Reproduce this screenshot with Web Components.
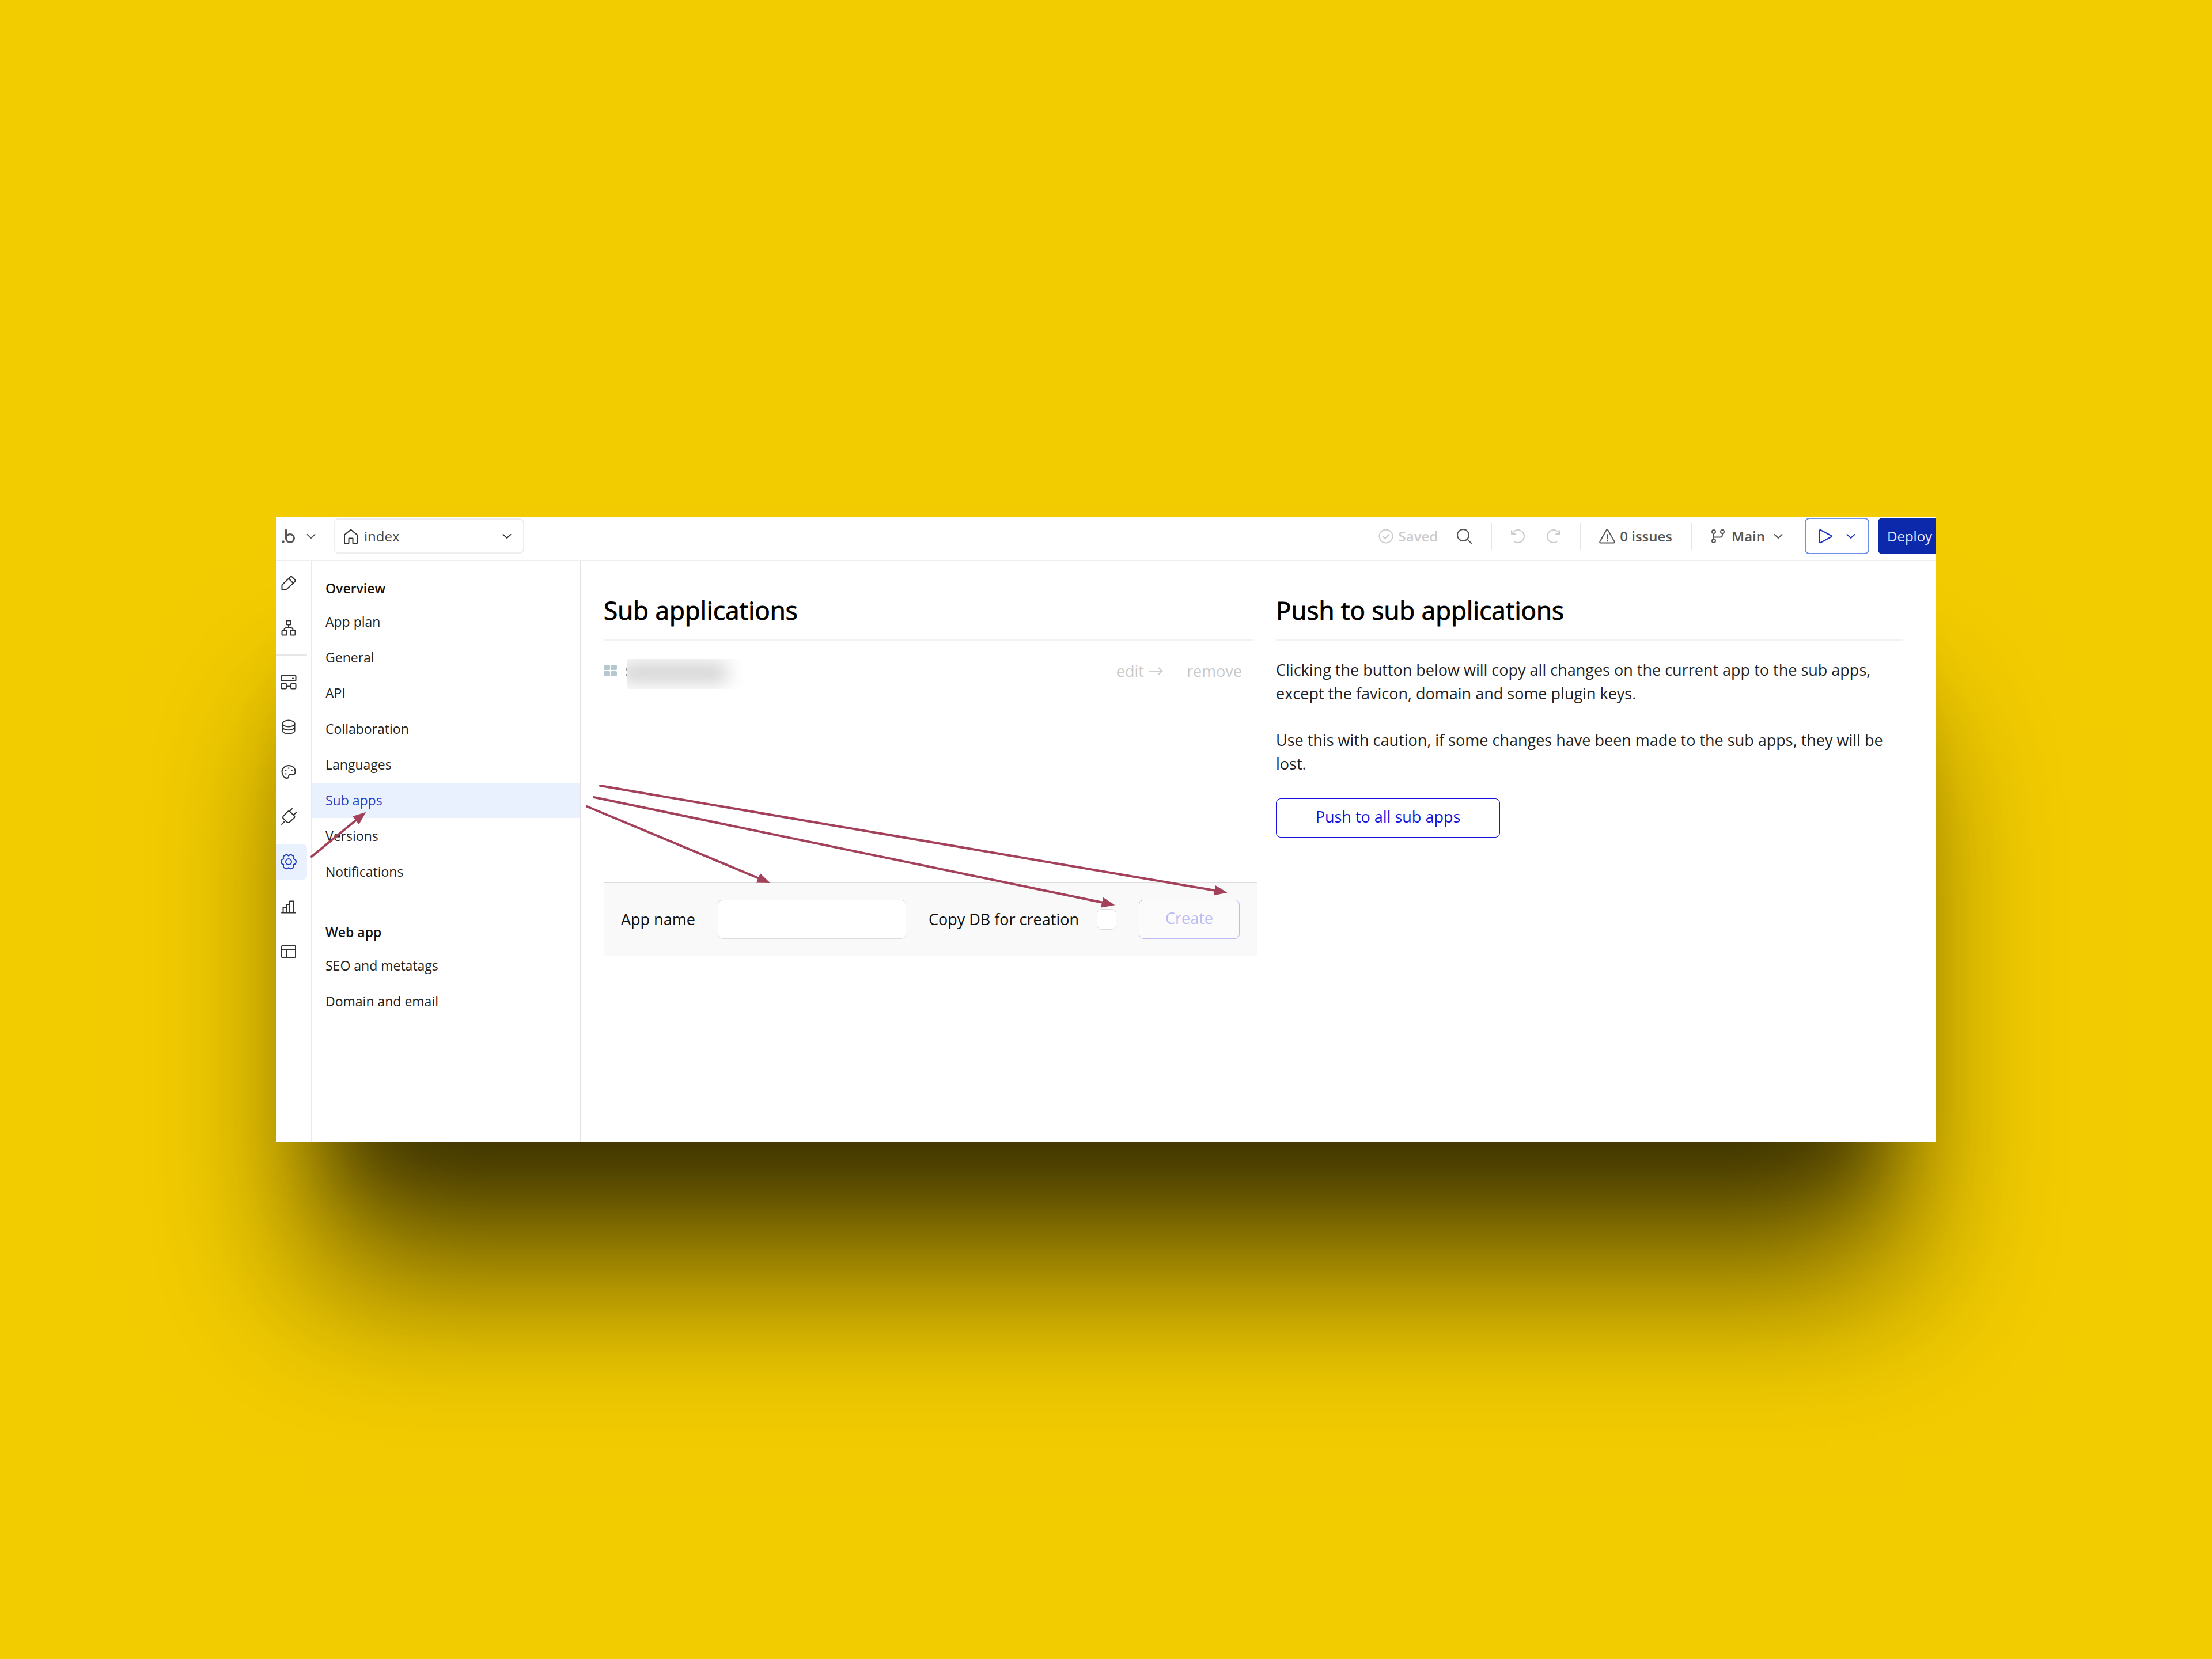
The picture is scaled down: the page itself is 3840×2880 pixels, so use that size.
<!DOCTYPE html>
<html lang="en">
<head>
<meta charset="utf-8">
<title>Sub applications</title>
<style>
    html, body { height: 100%; }

    body {
        margin: 0;
        display: flex;
        align-items: center;
        justify-content: center;
        background: #f3cc00;
        font-family: "Open Sans", "Noto Sans CJK JP", sans-serif;
        font-size: 24px;
        color: #222;
    }
</style>
</head>
<body>
    <app-window>
        <top-bar slot="top"></top-bar>
        <icon-rail slot="rail"></icon-rail>
        <side-nav slot="nav">
            <nav-section>
                <span slot="title">Overview</span>
                <nav-item>App plan</nav-item>
                <nav-item>General</nav-item>
                <nav-item>API</nav-item>
                <nav-item>Collaboration</nav-item>
                <nav-item>Languages</nav-item>
                <nav-item active>Sub apps</nav-item>
                <nav-item>Versions</nav-item>
                <nav-item>Notifications</nav-item>
            </nav-section>
            <nav-section>
                <span slot="title">Web app</span>
                <nav-item>SEO and metatags</nav-item>
                <nav-item>Domain and email</nav-item>
            </nav-section>
        </side-nav>
        <content-panel>
            <span slot="title">Sub applications</span>
            <sub-app-list></sub-app-list>
            <create-form></create-form>
        </content-panel>
        <content-panel wide-rule>
            <span slot="title">Push to sub applications</span>
            <push-panel>
                <p>Clicking the button below will copy all changes on the current app to the sub apps, except the favicon, domain and some plugin keys.</p>
                <p>Use this with caution, if some changes have been made to the sub apps, they will be lost.</p>
            </push-panel>
        </content-panel>
        <arrow-layer slot="overlay"></arrow-layer>
    </app-window>

<script>
// attach an open shadow root and fill it
function define(name, html) {
    const template = document.createElement('template');
    template.innerHTML = html;

    window.customElements.define(name, class extends HTMLElement {
        constructor() {
            super();
            this.attachShadow({ mode: 'open' });
            this.shadowRoot.appendChild(template.content.cloneNode(true));
        }
    });
}

// ICONS, all on a 28 x 28 grid
const icons = {
    logo: '<circle cx="3.5" cy="23.500" r="2.200" fill="currentColor" stroke="none"/><path d="M8.500 3v14" stroke-width="3"/><circle cx="15.500" cy="17.500" r="7" stroke-width="3"/>',
    chevron: '<path d="M7.500 11l6.500 6 6.500-6"/>',
    home: '<path d="M3 26V11.500L14 2.500l11 9V26h-7.500v-8.500h-7V26z"/>',
    saved: '<circle cx="14" cy="14" r="11.500"/><path d="M9 14.500l3.500 3.500 6.500-7"/>',
    search: '<circle cx="12" cy="12" r="10"/><path d="M19 19l7.500 7.500"/>',
    undo: '<path d="M2 4v6h7"/><path d="M3 9.500a11 11 0 1 1 4.500 14"/>',
    redo: '<path d="M26 4v6h-7"/><path d="M25 9.500a11 11 0 1 0-4.500 14"/>',
    warning: '<path d="M12.500 3.500q1.500-2 3 0L26.500 23q1 2.500-1.500 2.500H3q-2.500 0-1.500-2.500z"/><path d="M14 11v6.500M14 20.500v2"/>',
    branch: '<circle cx="6" cy="6" r="3"/><circle cx="6" cy="22" r="3"/><circle cx="21" cy="6" r="3"/><path d="M6 9v10M6 15.500h11q4 0 4-4V9"/>',
    play: '<path d="M4 3.500v21q0 1.500 1.500.5L24 15q1-1 0-2L5.500 3Q4 2 4 3.500z"/>',
    pencil: '<path d="M2.500 25.500v-8L17 3.500q1.500-1.500 3 0l5 5q1.500 1.500 0 3L11 24.500q-1.500 1-3 1z"/><path d="M14.500 6.500l7.500 8"/>',
    tree: '<rect x="10.500" y="1.500" width="7" height="7" rx="1"/><rect x="2.500" y="18.500" width="8.500" height="8" rx="1"/><rect x="17" y="18.500" width="8.500" height="8" rx="1"/><path d="M14 8.500V14M6.500 18.500V17q0-3 3-3h9q3 0 3 3v1.500"/>',
    data: '<rect x="1.500" y="2.500" width="25" height="9.500" rx="1.500"/><rect x="1.500" y="16.500" width="8.500" height="9" rx="1.500"/><rect x="18" y="16.500" width="8.500" height="9" rx="1.500"/><path d="M10 21.500h8M21 7.500h1"/>',
    database: '<ellipse cx="14" cy="8" rx="10.500" ry="5.500"/><path d="M3.500 8v12.500c0 7 21 7 21 0V8M3.500 14c0 7 21 7 21 0"/>',
    palette: '<path d="M25.500 13C25.500 7 20.500 3 14 3S2.500 8 2.500 14 7 25 11.500 25q2.500-.500 2.500-3 0-4 4-4h5q2.500 0 2.500-5z"/><path d="M8.500 11h1M13.500 7.500h1M19 11h1M8.500 17.500h1"/>',
    plug: '<path d="M5 12.500L12.500 5q2-2 4 0l7 7q2 2 0 4L16 23q-2.500 2-5 0l-6-6q-2-2 0-4.500zM2 27l6-6M15.500 4.500L20 0M22.500 11l4.500-4.500"/>',
    gear: '<path d="M26.800 12v4q-1 2-4.100 3 1 3.500-.2 4.800l-4.300 2.500q-2 .2-4.200-2-2.200 2.200-4.200 2l-4.300-2.500Q4.300 22.500 5.300 19q-3.100-1-4.100-3v-4q1-2 4.100-3-1-3.500.2-4.800l4.300-2.500q2-.2 4.200 2 2.200-2.200 4.200-2l4.300 2.500q1.200 1.300.2 4.800 3.100 1 4.100 3z"/><circle cx="14" cy="14" r="5"/>',
    chart: '<path d="M2 24.500h24M4.500 24V15.500h5.500V24M10 15.500V10h6v14M16 10V4.500h7V24"/>',
    layout: '<rect x="2" y="4" width="24" height="20" rx="1"/><path d="M2 11h24M11 11v13"/>',
    tiles: '<g fill="currentColor" stroke="none"><rect x="0" y="4" width="11" height="9" rx="2"/><rect x="12" y="4" width="11" height="9" rx="2"/><rect x="0" y="15" width="11" height="9" rx="2"/><rect x="12" y="15" width="11" height="9" rx="2"/></g>'
};

class AppIcon extends HTMLElement {
    connectedCallback() {
        if(!this.shadowRoot) this.attachShadow({ mode: 'open' });

        this.shadowRoot.innerHTML = `
            <style>
                :host { display: block; flex: none; width: 28px; height: 28px; }
                svg { display: block; width: 100%; height: 100%; overflow: visible; }
            </style>
            <svg viewBox="0 0 28 28" fill="none" stroke="currentColor" stroke-width="2" stroke-linecap="round" stroke-linejoin="round" aria-hidden="true">${icons[this.getAttribute('name')]}</svg>
        `;
    }
}
window.customElements.define('app-icon', AppIcon);

// WINDOW
define('app-window', `
    <style>
        :host {
            position: relative;
            display: flex;
            flex-direction: column;
            width: 75%;
            min-height: 1084px;
            background: #fff;
            box-shadow:
                0 300px 340px -60px rgba(0, 0, 0, .6),
                0 170px 130px -100px rgba(0, 0, 0, .4);
        }
        .body { flex: 1; display: flex; }
        main {
            flex: 1;
            display: grid;
            grid-template-columns: 1135fr 1089fr;
            gap: 32px;
            padding: 55px 56px 0 40px;
        }
    </style>
    <slot name="top"></slot>
    <div class="body">
        <slot name="rail"></slot>
        <slot name="nav"></slot>
        <main><slot></slot></main>
    </div>
    <slot name="overlay"></slot>
`);

define('top-bar', `
    <style>
        :host {
            display: flex;
            align-items: center;
            justify-content: space-between;
            padding: 1px 0 10px 8px;
            border-bottom: 2px solid #eee;
            color: #555;
            font-weight: 600;
            line-height: 33px;
        }
        .group, .item { display: flex; align-items: center; }
        .item { gap: 8px; }
        button {
            display: flex;
            align-items: center;
            padding: 0;
            border: 0;
            background: none;
            color: inherit;
            font: inherit;
        }
        .page {
            box-sizing: border-box;
            display: flex;
            align-items: center;
            gap: 9px;
            width: 331px;
            height: 61px;
            margin-left: 25px;
            padding: 0 14px;
            border: 2px solid #eee;
            border-radius: 8px;
            color: #333;
            font-weight: 400;
        }
        select {
            flex: 1;
            appearance: none;
            padding: 0;
            border: 0;
            background: none;
            color: #444;
            font: inherit;
        }
        .logo { gap: 10px; }
        .muted { color: #ccc; }
        .line { width: 2px; height: 46px; background: #e6e6e6; }
        .tools { gap: 32px; }
        .history { display: flex; gap: 32px; }
        .main { gap: 9px; }
        .preview {
            box-sizing: border-box;
            justify-content: space-between;
            width: 112px;
            height: 63px;
            padding: 0 16px 0 20px;
            border: 2px solid #6c90ec;
            border-radius: 8px;
            color: #1c34bd;
        }
        .deploy {
            width: 100px;
            height: 63px;
            margin-left: -17px;
            padding-left: 16px;
            border-radius: 8px 0 0 8px;
            background: #0d29ab;
            color: #e8ebfa;
            font-weight: 400;
        }
    </style>
    <div class="group">
        <button class="logo" aria-label="Menu"><app-icon name="logo"></app-icon><app-icon name="chevron"></app-icon></button>
        <label class="page">
            <app-icon name="home"></app-icon>
            <select aria-label="Page"><option>index</option></select>
            <app-icon name="chevron"></app-icon>
        </label>
    </div>
    <div class="group tools">
        <span class="item muted"><app-icon name="saved"></app-icon>Saved</span>
        <button aria-label="Search"><app-icon name="search"></app-icon></button>
        <span class="line"></span>
        <span class="history muted">
            <button aria-label="Undo"><app-icon name="undo"></app-icon></button>
            <button aria-label="Redo"><app-icon name="redo"></app-icon></button>
        </span>
        <span class="line"></span>
        <button class="item"><app-icon name="warning"></app-icon>0 issues</button>
        <span class="line"></span>
        <button class="main"><app-icon name="branch"></app-icon>Main<app-icon name="chevron"></app-icon></button>
        <button class="preview" aria-label="Preview"><app-icon name="play"></app-icon><app-icon name="chevron"></app-icon></button>
        <button class="deploy">Deploy</button>
    </div>
`);

define('icon-rail', `
    <style>
        :host {
            box-sizing: border-box;
            display: flex;
            flex-direction: column;
            gap: 16px;
            width: 62px;
            padding: 7px 7px 0 0;
            border-right: 2px solid #eaeaea;
        }
        button {
            display: flex;
            align-items: center;
            height: 62px;
            padding: 0 0 0 7px;
            border: 0;
            border-radius: 0 8px 8px 0;
            background: none;
            color: #333;
        }
        button.active { background: #e9f1ff; color: #1c3fc4; }
        hr { width: 100%; height: 2px; margin: -1px 0; border: 0; background: #e6e6e6; }
    </style>
    <button aria-label="Design"><app-icon name="pencil"></app-icon></button>
    <button aria-label="Workflow"><app-icon name="tree"></app-icon></button>
    <hr>
    <button aria-label="Views"><app-icon name="data"></app-icon></button>
    <button aria-label="Data"><app-icon name="database"></app-icon></button>
    <button aria-label="Styles"><app-icon name="palette"></app-icon></button>
    <button aria-label="Plugins"><app-icon name="plug"></app-icon></button>
    <button class="active" aria-label="Settings"><app-icon name="gear"></app-icon></button>
    <button aria-label="Logs"><app-icon name="chart"></app-icon></button>
    <button aria-label="Templates"><app-icon name="layout"></app-icon></button>
`);

// SIDE NAVIGATION
define('side-nav', `
    <style>
        :host {
            box-sizing: border-box;
            display: flex;
            flex-direction: column;
            gap: 58px;
            width: 466px;
            padding-top: 31px;
            border-right: 1px solid #e2e2e2;
            font-size: 23px;
        }
    </style>
    <slot></slot>
`);

define('nav-section', `
    <style>
        :host { display: block; }
        h2 { margin: 0 0 11px; padding-left: 23px; color: #111; font-size: 23px; font-weight: 600; line-height: 33px; }
        nav { display: flex; flex-direction: column; gap: 1px; }
    </style>
    <h2><slot name="title"></slot></h2>
    <nav><slot></slot></nav>
`);

define('nav-item', `
    <style>
        :host { display: block; }
        a { display: block; padding-left: 23px; color: #222; line-height: 61px; text-decoration: none; }
        :host([active]) a { background: #e9f1ff; color: #2a41c4; }
    </style>
    <a href="#"><slot></slot></a>
`);

// CONTENT
define('content-panel', `
    <style>
        :host { display: flex; flex-direction: column; font-size: 27px; line-height: 41px; }
        /* the stroke stands in for a medium weight */
        h1 {
            margin: 0 7px 0 0;
            padding-bottom: 21px;
            border-bottom: 2px solid #f2f2f2;
            color: #000;
            font-size: 44px;
            font-weight: 400;
            line-height: 60px;
            -webkit-text-stroke: 1px #000;
        }
        :host([wide-rule]) h1 { margin-right: 0; }
    </style>
    <h1><slot name="title"></slot></h1>
    <slot></slot>
`);

define('sub-app-list', `
    <style>
        :host { box-sizing: border-box; display: block; min-height: 420px; padding: 30px 27px 0 0; }
        .row { display: flex; align-items: center; height: 44px; }
        app-icon { color: #b5c8d0; }
        /* hidden name of the app */
        .name { display: flex; width: 220px; height: 52px; margin: 12px 0 0 10px; }
        .tick { box-sizing: border-box; width: 2px; height: 14px; margin-top: 16px; border-top: 4px solid #999; border-bottom: 4px solid #999; }
        .cover { flex: 1; overflow: hidden; }
        .cover i { display: block; width: 184px; height: 32px; margin: 8px 0 0 -10px; background: #cdcdcd; filter: blur(16px); }
        .links { display: flex; gap: 40px; margin-left: auto; }
        a { color: #c8c8c8; text-decoration: none; }
    </style>
    <div class="row">
        <app-icon name="tiles"></app-icon>
        <span class="name"><span class="tick"></span><span class="cover"><i></i></span></span>
        <span class="links"><a href="#">edit →</a><a href="#">remove</a></span>
    </div>
`);

const buttonStyle = `
    button {
        box-sizing: border-box;
        height: 68px;
        padding: 0 0 6px;
        border: 1px solid #1414dc;
        border-radius: 8px;
        background: none;
        color: #1414dc;
        font: inherit;
    }
`;

define('create-form', `
    <style>
        ${buttonStyle}
        :host { display: block; }
        form {
            box-sizing: border-box;
            display: flex;
            align-items: center;
            gap: 39px;
            height: 128px;
            padding: 0 30px 0 29px;
            border: 1px solid #ddd;
            background: #f9f9f9;
            color: #111;
        }
        label { padding-bottom: 2px; }
        input { box-sizing: border-box; margin: 0; border: 1px solid #ddd; border-radius: 8px; background: #fff; }
        input[type=text] { flex: 1; min-width: 0; height: 68px; padding: 0 16px; font: inherit; }
        input[type=checkbox] { appearance: none; width: 34px; height: 36px; }
        .copy { display: flex; align-items: center; gap: 31px; }
        button { width: 175px; border-color: #bcbcf4; background: #fbfbfb; color: #bcbcf4; }
    </style>
    <form>
        <label for="app-name">App name</label>
        <input type="text" id="app-name">
        <span class="copy">
            <label for="copy-db">Copy DB for creation</label>
            <input type="checkbox" id="copy-db">
        </span>
        <button type="button" disabled>Create</button>
    </form>
`);

define('push-panel', `
    <style>
        ${buttonStyle}
        :host { display: block; padding-top: 30px; }
        ::slotted(p) { margin: 0 0 40px; }
        button { width: 389px; }
    </style>
    <slot></slot>
    <button type="button">Push to all sub apps</button>
`);

// ARROWS drawn over the window
define('arrow-layer', `
    <style>
        :host { position: absolute; inset: 0; pointer-events: none; }
        svg { display: block; width: 100%; }
    </style>
    <svg viewBox="0 0 2880 1084" stroke="#a3405a" stroke-width="4" stroke-linecap="round" aria-hidden="true">
        <defs>
            <marker id="head" markerUnits="userSpaceOnUse" markerWidth="24" markerHeight="20" refX="2" refY="10" orient="auto">
                <path d="M0 1l23 9-23 9z" fill="#a3405a" stroke="none"/>
            </marker>
        </defs>
        <path d="M61 589L139 525" marker-end="url(#head)"/>
        <path d="M539 502L838 627" marker-end="url(#head)"/>
        <path d="M551 486L1435 669" marker-end="url(#head)"/>
        <path d="M562 466L1630 648" marker-end="url(#head)"/>
    </svg>
`);
</script>
</body>
</html>
